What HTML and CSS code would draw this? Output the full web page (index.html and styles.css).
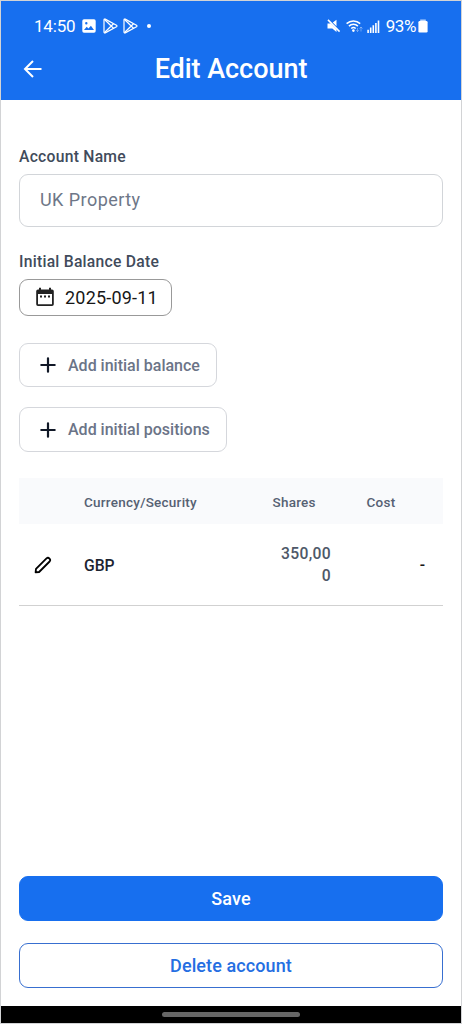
FILE: index.html
```html
<!DOCTYPE html>
<html lang="en">
<head>
<meta charset="utf-8">
<title>Edit Account</title>
<link rel="stylesheet" href="styles.css">
</head>
<body>
<div class="screen">
  <header class="header">
    <div class="status">
      <span class="time">14:50</span>
      <svg class="photo" width="14" height="14" viewBox="0 0 14 14"><path fill="#fff" fill-rule="evenodd" d="M2 .3h10a1.7 1.7 0 0 1 1.7 1.7v10a1.7 1.7 0 0 1-1.7 1.7H2A1.7 1.7 0 0 1 .3 12V2A1.7 1.7 0 0 1 2 .3ZM2 11h10L8.900 6.800 6.500 9.500 4.700 7.800ZM4.300 3a1.200 1.200 0 1 0 0 2.400A1.200 1.200 0 0 0 4.300 3Z"/></svg>
      <svg class="play" width="15" height="16" viewBox="0 0 15 16"><g fill="none" stroke="#fff" stroke-width="1.200" stroke-linejoin="round"><path d="M1 1.900v12.200c0 .8.6 1.100 1.200.8l11.300-6.200c.6-.4.6-1 0-1.400L2.200 1.100C1.600.8 1 1.100 1 1.900Z"/><path d="M1.300 1.300 10.500 10.300M1.300 14.700l9.200-9"/></g></svg>
      <svg class="play" width="15" height="16" viewBox="0 0 15 16"><g fill="none" stroke="#fff" stroke-width="1.200" stroke-linejoin="round"><path d="M1 1.900v12.200c0 .8.6 1.100 1.200.8l11.300-6.200c.6-.4.6-1 0-1.400L2.200 1.100C1.600.8 1 1.100 1 1.900Z"/><path d="M1.300 1.300 10.500 10.300M1.300 14.700l9.200-9"/></g></svg>
      <span class="dot"></span>
      <svg class="mute" width="14" height="14" viewBox="0 0 14 14"><path fill="#fff" d="M.5 4.500h3.300l5.700 5.700V13L5.300 9.400H.5ZM5.800 3.600 9.500.7v6.600Z"/><path d="M1 .9 12.600 12.600" stroke="#fff" stroke-width="1.500"/></svg>
      <svg class="wifi" width="17" height="14" viewBox="0 0 17 14"><g fill="none" stroke="#fff" stroke-width="1.500"><path d="M.6 4.600a9.900 9.900 0 0 1 13.600 0"/><path d="M2.900 7.100a6.600 6.600 0 0 1 9 0"/><path d="M5.200 9.500a3.400 3.400 0 0 1 4.500 0"/></g><circle cx="7.400" cy="11.600" r="1.300" fill="#fff"/><path d="M11.500 9v3.500m-1.300-1.300 1.300 1.300 1.300-1.300M15 12.500V8m-1.400 1.500L15 8l1.500 1.500" fill="none" stroke="#fff" stroke-opacity=".45" stroke-width=".8"/></svg>
      <svg class="signal" width="13" height="13" viewBox="0 0 13 13"><path d="M1.100 13V9.700M3.700 13V7.600M6.300 13V5.300M8.900 13V3M11.500 13V.5" stroke="#fff" stroke-width="1.600"/></svg>
      <span class="charge">93%</span>
      <svg class="battery" width="10" height="14" viewBox="0 0 10 14"><rect x="2.200" y=".5" width="5.600" height="2" fill="#b9d5fc"/><rect x=".4" y="2" width="9.200" height="11.500" rx="1.300" fill="#fff"/></svg>
    </div>
    <div class="titlebar">
      <svg class="back" width="20" height="20" viewBox="0 0 20 20"><path d="M18.500 10H2M10 2 2 10l8 8" fill="none" stroke="#fff" stroke-width="2"/></svg>
      <h1 class="title">Edit Account</h1>
    </div>
  </header>
  <main class="content">
    <label class="label">Account Name</label>
    <div class="input">UK Property</div>
    <label class="label label-date">Initial Balance Date</label>
    <div class="date">
      <svg width="18" height="20" viewBox="0 0 18 20"><path fill="#222" fill-rule="evenodd" d="M3 .8h2v1.700h8V.8h2v1.700h1a1.800 1.800 0 0 1 1.800 1.800v13A1.800 1.800 0 0 1 16 19.100H2A1.800 1.800 0 0 1 .2 17.300v-13A1.800 1.800 0 0 1 2 2.500h1ZM2 7v10.300h14V7Z"/><path fill="#222" d="M4 8.500h2v2H4zM8 8.500h2v2H8zM12 8.500h2v2h-2z"/></svg>
      <span class="date-text">2025-09-11</span>
    </div>
    <button class="add add-balance"><svg width="16" height="16" viewBox="0 0 16 16"><path d="M8 1.300v13.400M1.300 8h13.400" stroke="#111827" stroke-width="2.200" stroke-linecap="round"/></svg><span>Add initial balance</span></button>
    <button class="add add-positions"><svg width="16" height="16" viewBox="0 0 16 16"><path d="M8 1.300v13.400M1.300 8h13.400" stroke="#111827" stroke-width="2.200" stroke-linecap="round"/></svg><span>Add initial positions</span></button>
    <div class="table">
      <div class="row head"><span></span><span>Currency/Security</span><span class="shares-head">Shares</span><span class="cost-head">Cost</span></div>
      <div class="row item">
        <svg class="pencil" width="18" height="18" viewBox="0 0 18 18"><path d="M1.600 16.400 2 12.900 12.500 2.400a2.200 2.200 0 0 1 3.100 3.100L5.100 16Z" fill="none" stroke="#000" stroke-width="1.800" stroke-linejoin="round"/></svg>
        <span class="currency">GBP</span><span class="shares">350,00<br>0</span><span class="cost">-</span>
      </div>
    </div>
    <div class="actions">
      <button class="action save">Save</button>
      <button class="action delete">Delete account</button>
    </div>
  </main>
  <footer class="navbar"><span class="handle"></span></footer>
</div>
</body>
</html>
```
FILE: styles.css
```css
* { box-sizing: border-box; }
body { margin: 0; font-family: Roboto, "Liberation Sans", sans-serif; }
button { font-family: inherit; margin: 0; padding: 0; background: #fff; }
svg { display: block; flex: none; }
span { white-space: nowrap; }
.screen { width: 462px; height: 1024px; border: 1px solid #d2d3d5; background: #fff; display: flex; flex-direction: column; }
.header { height: 99px; background: #176fef; color: #fff; }
.status { display: flex; align-items: center; height: 50px; padding: 0 33px; font-size: 17px; }
.time { width: 48px; letter-spacing: -0.2px; }
.photo { margin-right: 7px; }
.play { margin-right: 5px; }
.dot { width: 4px; height: 4px; border-radius: 50%; background: #fff; margin-left: 4px; }
.mute { margin-left: auto; }
.wifi { margin-left: 5px; }
.signal { margin-left: 4px; }
.charge { margin-left: 6px; letter-spacing: -0.4px; }
.battery { margin-left: 2px; }
.titlebar { display: grid; grid-template-columns: 60px 1fr 60px; align-items: center; height: 36px; }
.back { margin-left: 22px; }
.title { margin: 0; text-align: center; font-size: 27px; line-height: 34px; font-weight: 500; letter-spacing: -.05px; }
.content { flex: 1; padding: 44px 18px 18px; display: flex; flex-direction: column; align-items: flex-start; }
.label { height: 24px; line-height: 26px; margin-bottom: 6px; font-size: 15.7px; font-weight: 500; letter-spacing: .25px; color: #414b5b; }
.input { width: 100%; height: 53px; border: 1px solid #d2d5d9; border-radius: 9px; padding-left: 20px; line-height: 50px; font-size: 18px; letter-spacing: .45px; color: #6e7788; }
.label-date { margin-top: 22px; margin-bottom: 6px; }
.date { width: 153px; height: 37px; border: 1px solid #999; border-radius: 9px; display: flex; align-items: center; gap: 11px; padding: 0 0 1px 16px; font-size: 18px; letter-spacing: .2px; color: #171717; }
.add { height: 44px; border: 1px solid #d5d7dc; border-radius: 9px; display: flex; align-items: center; gap: 12px; padding-left: 20px; font-size: 16px; font-weight: 500; letter-spacing: 0; color: #6b7487; }
.add-balance { width: 198px; margin-top: 27px; }
.add-positions { width: 208px; height: 45px; margin-top: 20px; }
.table { width: 100%; margin-top: 26px; }
.row { display: grid; grid-template-columns: 65px 170px 106px 83px; align-items: center; }
.head { height: 46px; background: #f9fafc; padding-top: 2px; font-size: 13.5px; font-weight: 500; letter-spacing: .25px; color: #566173; }
.shares-head { padding-left: 18.5px; }
.cost-head { padding-left: 6.5px; }
.item { height: 82px; border-bottom: 1px solid #d1d1d1; font-size: 15.7px; font-weight: 500; line-height: 22px; }
.pencil { margin-left: 15px; }
.currency { padding-top: 2px; color: #1c2431; }
.shares { text-align: right; padding-top: 1px; padding-right: 29px; letter-spacing: .3px; color: #4e5868; }
.cost { text-align: right; padding-right: 18px; color: #171717; }
.actions { margin-top: auto; width: 100%; display: grid; gap: 22px; }
.action { height: 45px; border: 1px solid #176fef; border-radius: 9px; font-size: 18px; font-weight: 500; letter-spacing: .1px; }
.save { background: #176fef; color: #fff; }
.delete { color: #246ee2; border-color: #386fd0; }
.navbar { height: 17px; background: #000; display: flex; align-items: center; justify-content: center; }
.handle { width: 138px; height: 5px; border-radius: 3px; background: #666; }
```
